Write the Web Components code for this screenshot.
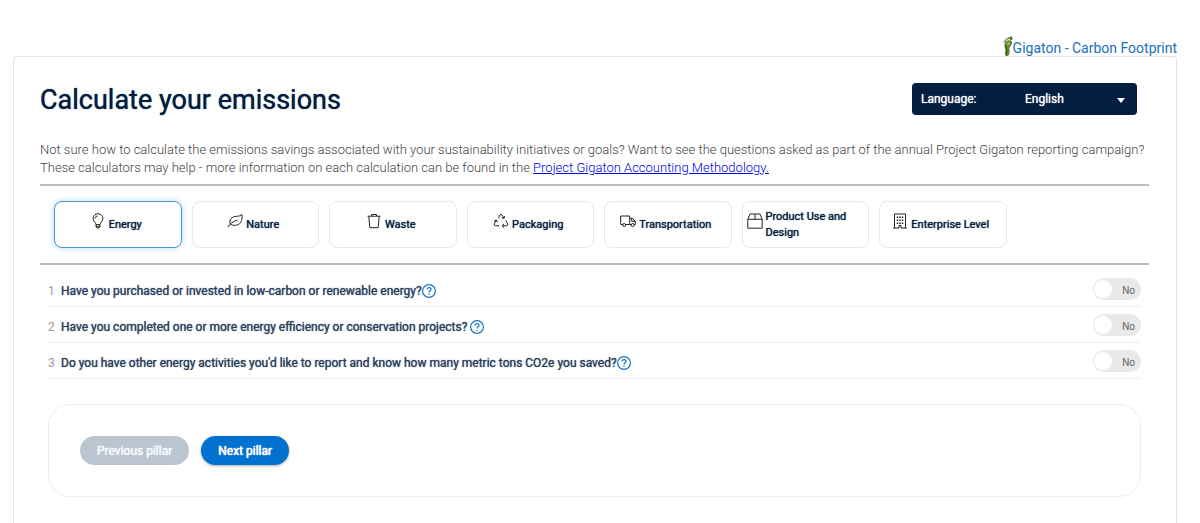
<!DOCTYPE html>
<html lang="en">
<head>
<meta charset="utf-8">
<title>Gigaton - Carbon Footprint</title>
<style>
  body { margin: 0; background: #fff; font-family: Roboto, "Liberation Sans", sans-serif; font-size: 13px; line-height: 18px; color: #6d6f72; }
</style>
</head>
<body>
<emissions-page></emissions-page>

<script>
const define = (name, html, setup) => {
  const template = document.createElement('template');
  template.innerHTML = html;
  customElements.define(name, class extends HTMLElement {
    constructor() {
      super();
      this.attachShadow({ mode: 'open' }).append(template.content.cloneNode(true));
    }
    connectedCallback() { if (setup) setup(this, this.shadowRoot); }
  });
};

const icons = {
  energy: '<path d="M6 11.6C6 9.700 3.100 8.600 3.100 5.600a4.900 4.900 0 0 1 9.800 0C12.900 8.600 10 9.700 10 11.600ZM6 11.600v2.200l1 1.200h2l1-1.200v-2.200M6 13.300h4M5 5.300A3 3 0 0 1 7.500 2.900"/>',
  nature: '<path d="M.8 14.200C2.500 11 5.500 8.500 10.500 7M3.300 11.200C1.800 6.500 5 3.500 9.500 3.300c2.500-.1 4.300-.6 5.400-2 .5 4.500-.3 8.500-3.500 10.200-2.400 1.200-5.500 1.200-8.100-.3Z"/>',
  waste: '<path d="M1.500 3.200h13M5.500 3V1.500h5V3M2.800 3.400l1 11.300h8.400l1-11.300"/>',
  packaging: '<path d="M5.300 5.200 7.100 1.900q.9-1.200 1.800 0L11 5.300M8.700 4.600l2.300.8.700-2.300M12.700 7.300l2 3.500q.6 1.600-1.100 2H9.200M11 10.900l-2 1.900 2 1.900M6.200 12.800H2.500q-1.800-.4-1.100-2l2-3.600M1.100 7.900l2.400-.8.800 2.300"/>',
  transportation: '<path d="M2.800 11.500H.7V3h9v8.500H5.600M9.700 5.300h2.800l2.800 3.200v3h-1.200M11.300 11.500H9.700M11.700 5.300v3h3.500"/><circle cx="4.200" cy="12" r="1.500"/><circle cx="12.700" cy="12" r="1.500"/>',
  product: '<path d="M.8 6.300h14.400v8.900H.8ZM.8 6.300 3 1h10l2.200 5.300M8 1v5.300"/>',
  enterprise: '<path d="M2.500 15V1h11v14M1 15h6v-2.500h2V15h6"/><path stroke-width="1.500" stroke-dasharray="1.500 1.500" d="M5.500 3.500v8M8 3.500v8M10.500 3.500v8"/>'
};

define('brand-link', `
  <style>
    :host { display: flex; justify-content: flex-end; }
    a { display: flex; align-items: flex-end; color: #1b6fbb; text-decoration: none; font-size: 14px; line-height: 15px; }
    svg { width: 10px; height: 20px; }
  </style>
  <a href="#"><svg viewBox="0 0 10 20" aria-hidden="true">
    <path fill="#648a2c" d="M1.500 8.500C1.500 5.500 4 4 6.500 4.200 9.500 4.400 9.700 7 8.300 9c-1.200 1.700-2.100 2.700-1.800 4.600.3 2.300.3 6.400-2.300 6.400C1.500 20 2.600 16.300 2.700 14.500 2.800 12.600 1.500 11 1.500 8.500Z"/>
    <path fill="#345b12" d="M1.500 8.500c.2 2.500 1.300 4 1.200 6-.1 1.800-1.200 5.500 1.500 5.500-.7-2 .5-5-.2-7.500-.7-2.400-1.500-2.500-2.500-4Z"/>
    <g fill="#4d7620"><ellipse cx="8" cy="2.200" rx="1.500" ry="2"/><circle cx="5.500" cy="2.200" r="1"/><circle cx="3.800" cy="3.100" r=".9"/><circle cx="2.300" cy="4.400" r=".8"/><circle cx="1.300" cy="5.900" r=".7"/></g>
    <ellipse cx="5.500" cy="7.500" rx="1.700" ry="1.500" fill="#9fb66b"/>
  </svg><slot></slot></a>`);

define('language-picker', `
  <style>
    :host { display: flex; align-items: center; width: 225px; height: 32px; box-sizing: border-box; padding: 0 9px; border-radius: 4px; background: #041e42; color: #fff; font-size: 12px; text-shadow: 0 0 1px currentColor; }
    label { flex: 0 0 104px; }
    div { flex: 1; display: grid; align-items: center; }
    select, svg { grid-area: 1 / 1; }
    select { appearance: none; border: 0; padding: 0; margin: 0; width: 100%; background: none; color: inherit; font: inherit; line-height: 18px; text-shadow: inherit; }
    svg { justify-self: end; width: 14px; height: 14px; pointer-events: none; }
  </style>
  <label for="lang">Language:</label>
  <div><select id="lang"><option>English</option><option>Español</option></select>
  <svg viewBox="0 0 14 14" fill="#fff" aria-hidden="true"><path d="M3 6h8l-4 5z"/></svg></div>`);

define('pillar-tab', `
  <style>
    :host { display: block; }
    button { display: flex; align-items: center; justify-content: center; gap: 3px; width: 100%; height: 47px; box-sizing: border-box; padding: 0 4px; margin: 0; border: 1px solid #e6e8ea; border-radius: 8px; background: #fff; color: #041e42; font: 400 11px/16px Roboto, "Liberation Sans", sans-serif; text-align: left; text-shadow: 0 0 1px currentColor; }
    :host([selected]) button { border-color: #4a92d8; box-shadow: 0 0 7px #b9dcfb; }
    svg { flex: none; width: 16px; height: 16px; margin-bottom: 8px; fill: none; stroke: #222; stroke-width: 1; }
    span { padding-right: 4px; }
  </style>
  <button type="button"><svg viewBox="0 0 16 16" aria-hidden="true"></svg><span><slot></slot></span></button>`,
  (host, root) => {
    root.querySelector('svg').innerHTML = icons[host.getAttribute('icon')];
    root.querySelector('button').setAttribute('aria-pressed', host.hasAttribute('selected'));
  });

define('yes-no-switch', `
  <style>
    :host { display: block; }
    label { display: grid; width: 48px; height: 22px; align-items: center; font-size: 10px; line-height: 14px; color: #666; }
    input, span { grid-area: 1 / 1; }
    input { appearance: none; display: flex; align-items: center; box-sizing: border-box; width: 48px; height: 22px; margin: 0; padding: 0 1px; border-radius: 11px; background: #e9e9e9; }
    input::before { content: ""; width: 18px; height: 18px; border-radius: 50%; background: #fff; }
    input:checked { background: #0071ce; justify-content: flex-end; }
    span { justify-self: end; padding: 4px 6px 0 0; pointer-events: none; }
  </style>
  <label><input type="checkbox" role="switch"><span>No</span></label>`,
  (host, root) => root.querySelector('input').setAttribute('aria-label', host.getAttribute('label')));

define('question-row', `
  <style>
    :host { display: flex; align-items: center; height: 36px; box-sizing: border-box; border-bottom: 1px solid #f8eaea; }
    .number { flex: 0 0 13px; color: #999; font-size: 12px; padding-top: 4px; }
    .text { color: #2c405e; font-size: 12px; text-shadow: 0 0 1px currentColor; padding-top: 4px; }
    button { display: flex; margin: 4px 0 0; padding: 0; border: 0; background: none; }
    :host([spaced]) button { margin-left: 3px; }
    svg { width: 14px; height: 14px; }
    yes-no-switch { margin-left: auto; }
  </style>
  <span class="number"></span><span class="text"><slot></slot></span>
  <button type="button" aria-label="Help"><svg viewBox="0 0 14 14" fill="none" stroke="#1976c5" aria-hidden="true"><circle cx="7" cy="7" r="6.400" stroke-width="1.200"/><path stroke-width="1.200" d="M5 5.600C5 4.300 5.900 3.600 7 3.600s2 .7 2 1.800C9 6.800 7 6.900 7 8.600M7 9.700v1.300"/></svg></button>
  <yes-no-switch></yes-no-switch>`,
  (host, root) => {
    root.querySelector('.number').textContent = host.getAttribute('number');
    root.querySelector('yes-no-switch').setAttribute('label', host.textContent.trim());
  });

define('pill-button', `
  <style>
    :host { display: block; }
    button { height: 29px; margin: 0; padding: 0 17px; border: 0; border-radius: 15px; background: #0071ce; color: #fff; font: 400 12px/18px Roboto, "Liberation Sans", sans-serif; box-shadow: 0 1px 3px #0005; text-shadow: 0 0 1px currentColor, 0 0 1px currentColor; }
    button:disabled { background: #bac5d0; box-shadow: none; color: #f4f8fc; }
  </style>
  <button type="button"><slot></slot></button>`,
  (host, root) => { root.querySelector('button').disabled = host.hasAttribute('disabled'); });

define('emissions-page', `
  <style>
    :host { display: flex; flex-direction: column; min-height: 100vh; box-sizing: border-box; padding: 36px 23px 0 13px; }
    main { flex: 1; box-sizing: border-box; padding: 26px 27px 25px 26px; border: 1px solid #e4e5e8; border-bottom: 0; border-radius: 4px 4px 0 0; }
    header { display: flex; align-items: flex-start; justify-content: space-between; padding-right: 12px; }
    h1 { margin: 0; font-size: 27px; line-height: 34px; font-weight: 400; color: #041e42; text-shadow: 0 0 1px currentColor; }
    p { margin: 24px 0 7px; font-weight: 300; color: #444; }
    p a { color: #00e; }
    nav { display: grid; grid-template-columns: repeat(8, 1fr); gap: 10px; padding: 15px 5px 15px 14px; border: solid #bcbcbc; border-width: 2px 0; }
    .questions { padding: 6px 8px 0; }
    footer { display: flex; gap: 12px; margin: 25px 8px 0; padding: 31px; border: 1px solid #eceef0; border-radius: 22px; }
  </style>
  <brand-link>Gigaton - Carbon Footprint</brand-link>
  <main>
    <header><h1>Calculate your emissions</h1><language-picker></language-picker></header>
    <p><span>Not sure how to calculate the emissions savings associated with your sustainability initiatives or goals? Want to see the questions asked as part of the annual Project Gigaton reporting campaign?</span><br>
    <span>These calculators may help - more information on each calculation can be found in the </span><a href="#">Project Gigaton Accounting Methodology.</a></p>
    <nav>
      <pillar-tab icon="energy" selected>Energy</pillar-tab>
      <pillar-tab icon="nature">Nature</pillar-tab>
      <pillar-tab icon="waste">Waste</pillar-tab>
      <pillar-tab icon="packaging">Packaging</pillar-tab>
      <pillar-tab icon="transportation">Transportation</pillar-tab>
      <pillar-tab icon="product">Product Use and Design</pillar-tab>
      <pillar-tab icon="enterprise">Enterprise Level</pillar-tab>
    </nav>
    <div class="questions">
      <question-row number="1">Have you purchased or invested in low-carbon or renewable energy?</question-row>
      <question-row number="2" spaced>Have you completed one or more energy efficiency or conservation projects?</question-row>
      <question-row number="3">Do you have other energy activities you'd like to report and know how many metric tons CO2e you saved?</question-row>
    </div>
    <footer><pill-button disabled>Previous pillar</pill-button><pill-button>Next pillar</pill-button></footer>
  </main>`);
</script>
</body>
</html>
